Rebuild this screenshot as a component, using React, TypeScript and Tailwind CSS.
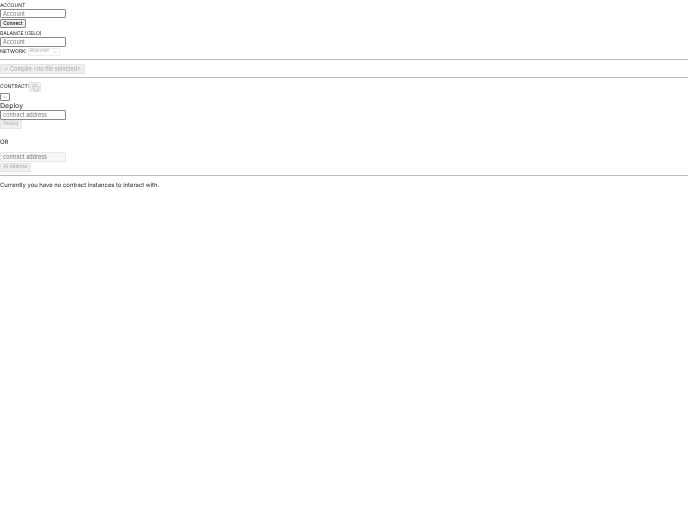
import { ChevronDown, Copy, RefreshCw } from "lucide-react";

const font = { fontFamily: "Inter, sans-serif" };

function Label({ children }: { children: React.ReactNode }) {
  return <label className="block pt-[2px] text-[5px] leading-[6px] text-[#222]">{children}</label>;
}

function DisabledButton({ children, className = "" }: { children: React.ReactNode; className?: string }) {
  return (
    <button disabled className={`flex items-center whitespace-nowrap border border-[#e4e4e4] bg-[#efefef] rounded-[1px] text-[#aaa] ${className}`}>
      {children}
    </button>
  );
}

export default function App() {
  return (
    <div className="w-[688px] h-[512px] bg-white text-[#222] overflow-hidden [text-rendering:geometricPrecision] blur-[0.3px]" style={font}>
      <div className="pt-[1px]">
        <Label>ACCOUNT</Label>
        <input placeholder="Account" className="block w-[66px] h-[9px] border border-[#888] rounded-[1px] px-[2px] text-[5.5px] placeholder:text-[#777] outline-none" />
      </div>
      <button className="block mt-[1px] h-[9px] w-[26px] border border-[#888] rounded-[1px] bg-[#efefef] text-[4.8px] leading-[7px] font-medium text-[#111]">
        Connect
      </button>
      <div className="mt-[1px]">
        <Label>BALANCE (CELO)</Label>
        <input placeholder="Account" className="block w-[66px] h-[10px] border border-[#888] rounded-[1px] px-[2px] text-[5.5px] placeholder:text-[#777] outline-none" />
      </div>
      <div className="flex items-center h-[9px]">
        <span className="pt-[2px] text-[5px] text-[#222]">NETWORK:</span>
        <div className="mt-[1px] ml-[1px] flex items-center justify-between w-[32px] h-[8px] border border-[#eee] rounded-[1px] px-[1px] text-[5px] text-[#aaa]">
          <span>Mainnet</span>
          <ChevronDown size={6} strokeWidth={1.5} />
        </div>
      </div>
      <hr className="mt-[3px] border-[#bbb]" />
      <DisabledButton className="mt-[4px] w-[85px] h-[10px] px-[3px] gap-[2px] text-[5.6px]">
        <RefreshCw size={6} strokeWidth={1.5} />
        <span>Compile &lt;no file selected&gt;</span>
      </DisabledButton>
      <hr className="mt-[3px] border-[#bbb]" />
      <div className="flex items-center h-[10px] mt-[4px]">
        <span className="pt-[2px] text-[5px] text-[#222]">CONTRACT:</span>
        <DisabledButton className="w-[12px] h-[10px] justify-center">
          <Copy size={7} strokeWidth={1.5} />
        </DisabledButton>
      </div>
      <div className="flex items-center justify-center mt-[1px] w-[10px] h-[8px] border border-[#888] rounded-[1px]">
        <ChevronDown size={6} strokeWidth={1.5} className="text-[#666]" />
      </div>
      <h3 className="text-[7px] leading-[9px] text-[#222]">Deploy</h3>
      <input placeholder="contract address" className="block w-[66px] h-[10px] border border-[#888] rounded-[1px] px-[2px] text-[5.5px] placeholder:text-[#777] outline-none" />
      <DisabledButton className="w-[22px] h-[9px] justify-center text-[4.5px]">Deploy</DisabledButton>
      <div className="mt-[10px] text-[6px] leading-[8px]">OR</div>
      <input disabled placeholder="contract address" className="block mt-[5px] w-[66px] h-[10px] border border-[#e8e8e8] bg-[#f7f7f7] rounded-[1px] px-[2px] text-[5.5px] placeholder:text-[#777] outline-none" />
      <DisabledButton className="mt-[1px] w-[31px] h-[9px] justify-center text-[4.6px]">At Address</DisabledButton>
      <hr className="mt-[3px] border-[#bbb]" />
      <p className="mt-[6px] text-[5.9px] leading-[8px] text-[#222]">Currently you have no contract instances to interact with.</p>
    </div>
  );
}
